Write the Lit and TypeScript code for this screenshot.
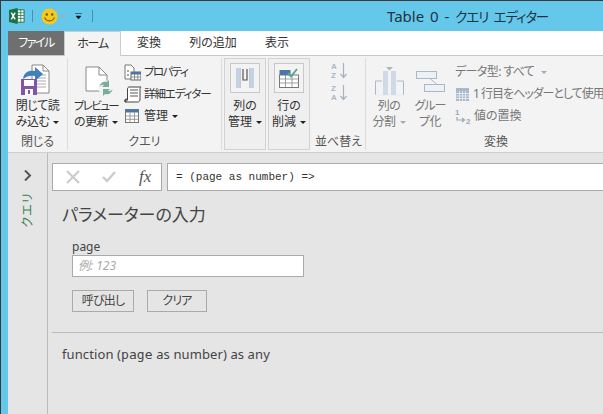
import { LitElement, html, css, svg } from "lit";
import { customElement } from "lit/decorators.js";

const arrow = (dim = false) => html`<i class="caret ${dim ? "dim" : ""}"></i>`;

@customElement("app-root")
export class AppRoot extends LitElement {
  static styles = css`
    :host { display: block; width: 603px; height: 414px; overflow: hidden; font-family: "Noto Sans", "Noto Sans CJK JP", sans-serif; font-size: 12px; color: #333; font-feature-settings: "palt"; }
    .win { width: 603px; height: 414px; box-sizing: border-box; border-top: 1px solid #3a3a3a; border-left: 1px solid #3a3a3a; background: #65c8ea; display: flex; flex-direction: column; padding-left: 7px; overflow: hidden; }
    svg { display: block; flex: none; }
    .title { height: 30px; margin-left: -7px; display: flex; align-items: center; position: relative; flex: none; }
    .qat { display: flex; align-items: center; padding-left: 8px; }
    .qat .sep { width: 1px; height: 12px; background: #4d8ea8; }
    .ttl { position: absolute; left: 386px; top: 5px; font-size: 15px; line-height: 20px; color: #1c3442; white-space: nowrap; word-spacing: 2px; }
    .ttl span { font-size: 13.5px; letter-spacing: -1.1px; word-spacing: 3px; }
    .tabs { height: 25px; flex: none; box-sizing: border-box; background: #fff; border-bottom: 1px solid #c6c6c6; display: flex; font-size: 12px; line-height: 23px; }
    .tab { text-align: center; flex: none; color: #333; white-space: nowrap; }
    .tab.file { width: 56px; height: 24px; background: #6f6f6f; color: #fff; letter-spacing: -1.5px; }
    .tab.home { width: 57px; height: 25px; box-sizing: border-box; background: #f3f3f3; border: 1px solid #ccc; border-bottom: none; letter-spacing: -1.2px; }
    .ribbon { height: 97px; flex: none; box-sizing: border-box; background: #f3f3f3; border-bottom: 1px solid #d0d0d0; display: flex; padding-top: 2px; line-height: 16px; }
    .group { display: flex; flex-direction: column; flex: none; box-sizing: border-box; height: 92px; }
    .group.sep { border-right: 1px solid #dcdcdc; }
    .body { flex: 1; display: flex; min-height: 0; }
    .label { height: 17px; line-height: 18px; text-align: center; color: #555; flex: none; }
    .large { display: flex; flex-direction: column; align-items: center; flex: none; white-space: nowrap; color: #333; }
    .large .ic { height: 38px; width: 100%; display: flex; align-items: flex-end; justify-content: center; flex: none; box-sizing: border-box; }
    .large .tx { text-align: center; margin-top: 2px; letter-spacing: -0.5px; }
    .k { font-size: 11.5px; letter-spacing: -1.6px; }
    .k2 { font-size: 11.5px; letter-spacing: -1.1px; }
    .dim { color: #777; }
    .dim .large { color: #777; }
    .caret { display: inline-block; width: 0; height: 0; border: 3px solid transparent; border-top: 3.5px solid #222; border-bottom: 0; vertical-align: 2px; margin-left: 4px; }
    .caret.dim { border-top-color: #aaa; }
    .small { display: flex; flex-direction: column; white-space: nowrap; }
    .row { height: 22px; display: flex; align-items: center; gap: 3px; }
    .boxed { width: 42px; height: 92px; box-sizing: border-box; border: 1px solid #d2d2d2; background: #efefef; margin-right: 2px; display: flex; flex-direction: column; align-items: center; flex: none; }
    .boxed .ibox { width: 30px; height: 30px; margin-top: 4px; box-sizing: border-box; border: 1px solid #c8c8c8; background: #f3f3f3; display: flex; align-items: center; justify-content: center; flex: none; }
    .boxed .tx { margin-top: 5px; text-align: center; white-space: nowrap; }
    .main { flex: 1; display: flex; min-height: 0; background: #e5e5e5; }
    .side { width: 40px; flex: none; box-sizing: border-box; border-right: 1px solid #bbb; display: flex; flex-direction: column; align-items: center; padding-top: 17px; }
    .vert { writing-mode: vertical-rl; text-orientation: sideways; transform: rotate(180deg); color: #3c8058; font-size: 12px; margin-top: 11px; line-height: 14px; font-feature-settings: normal; }
    .content { flex: 1; min-width: 0; display: flex; flex-direction: column; padding: 10px 0 0 4px; }
    .fbar { display: flex; gap: 5px; height: 28px; flex: none; }
    .fx { width: 110px; box-sizing: border-box; border: 1px solid #aaa; background: #fff; display: flex; align-items: center; flex: none; padding-left: 13px; gap: 22px; }
    .fxt { font-family: "Liberation Serif", serif; font-style: italic; font-size: 17px; color: #555; margin-left: 1px; }
    .formula { flex: 1; box-sizing: border-box; border: 1px solid #aaa; border-right: none; background: #fff; font-family: "Liberation Mono", monospace; font-size: 11px; line-height: 26px; padding-left: 8px; color: #333; white-space: nowrap; }
    .form { padding: 0 0 0 10px; height: 141px; box-sizing: border-box; flex: none; }
    h1 { margin: 12px 0 0 0; font-weight: 400; font-size: 17px; line-height: 24px; color: #444; }
    .pl { margin: 12px 0 0 10px; line-height: 16px; color: #444; font-size: 12px; }
    .inp { margin: 0 0 0 10px; width: 232px; height: 22px; box-sizing: border-box; border: 1px solid #aaa; background: #fff; padding-left: 5px; line-height: 20px; font-style: italic; color: #aaa; font-size: 12px; }
    .btns { display: flex; gap: 13px; margin: 13px 0 0 10px; }
    .btn { height: 22px; box-sizing: border-box; border: 1px solid #aaa; text-align: center; line-height: 20px; color: #444; font-size: 12px; letter-spacing: -0.8px; }
    .divider { height: 1px; background: #bbb; flex: none; }
    .fn { margin: 11px 0 0 10px; font-size: 13px; line-height: 20px; color: #444; white-space: nowrap; letter-spacing: 0.1px; }
    .fn span { font-family: "DejaVu Sans Mono", monospace; font-size: 13px; }
  `;

  private excel() {
    return svg`<svg width="16" height="16" viewBox="0 0 17 17"><rect x="6" y="2" width="10" height="13" fill="#fff" stroke="#1e7145"/><path d="M9 2v13M12.5 2v13M6 5h10M6 8h10M6 11h10" stroke="#1e7145" stroke-width=".8"/><path d="M0 2l9-2v17l-9-2z" fill="#1e7145"/><path d="M2.5 5l4 7M6.5 5l-4 7" stroke="#fff" stroke-width="1.5"/></svg>`;
  }

  private smile() {
    return svg`<svg width="17" height="17" viewBox="0 0 17 17"><circle cx="8.5" cy="8.5" r="8" fill="#f8c81c"/><circle cx="5.8" cy="6.5" r="1.2" fill="#6b5a10"/><circle cx="11.2" cy="6.5" r="1.2" fill="#6b5a10"/><path d="M3.8 9.5c1 4.5 8.4 4.5 9.4 0" fill="none" stroke="#6b5a10" stroke-width="1.1"/></svg>`;
  }

  private closeLoad() {
    return svg`<svg width="30" height="32" viewBox="0 0 30 32"><path d="M12 1h11l6 6v22H12z" fill="#fff" stroke="#888"/><path d="M23 1v6h6" fill="none" stroke="#888"/><path d="M17 11h9M17 14h9M17 17h9M17 20h9M17 23h9" stroke="#aaa"/><path d="M3 15c1-7 6-9 12-8V3l8 7-8 7v-5c-5-1-8 0-12 3z" fill="#3f80bd"/><rect x="1" y="15" width="16" height="16" fill="#8057a8"/><rect x="4" y="16" width="10" height="6" fill="#fff"/><rect x="5" y="25" width="8" height="6" fill="#fff"/><rect x="8" y="26" width="2" height="4" fill="#8057a8"/></svg>`;
  }

  private refresh() {
    return svg`<svg width="30" height="30" viewBox="0 0 30 30"><path d="M1 1h13l8 8v16H1z" fill="#fff" stroke="#888"/><path d="M14 1v8h8" fill="none" stroke="#888"/><circle cx="21" cy="22" r="7.5" fill="#f3f3f3"/><path d="M14.5 21c.5-4 4-6 7.500-5l2-2v7h-7l2-2c-2-.5-3.500.3-4.500 2zM27.500 23c-.5 4-4 6-7.500 5l-2 2v-7h7l-2 2c2 .5 3.500-.3 4.500-2z" fill="#79ad9a"/></svg>`;
  }

  private props() {
    return svg`<svg width="17" height="17" viewBox="0 0 17 17"><path d="M1 1h6l3 3v11H1z" fill="#fff" stroke="#777"/><circle cx="4" cy="7" r="1" fill="#888"/><circle cx="4" cy="11" r="1" fill="#888"/><rect x="7" y="8" width="10" height="8" fill="#fff" stroke="#666"/><rect x="7" y="8" width="10" height="2.500" fill="#4a76a8"/><path d="M10.500 10v6M13.800 10v6M7 13h10" stroke="#777" stroke-width=".8"/></svg>`;
  }

  private scroll() {
    return svg`<svg width="18" height="17" viewBox="0 0 18 17"><path d="M5 1h12c-1 1-1 2-1 3v9c0 2-1 3-2 3H1c1-.5 2-1 2.500-2V3C3.500 2 4 1 5 1z" fill="#fff" stroke="#444"/><path d="M6 4h8M6 7h8M6 10h8" stroke="#555"/><path d="M1 16c-1-2 0-3 2-3" fill="#444" stroke="#444"/></svg>`;
  }

  private table(w = 14, h = 14, c = "#4a76a8") {
    return svg`<svg width="${w}" height="${h}" viewBox="0 0 14 14"><rect x=".5" y=".5" width="13" height="13" fill="#fff" stroke="#777"/><rect x=".5" y=".5" width="13" height="3" fill="${c}"/><path d="M5 3.500v10M9.500 3.500v10M.5 7h13M.5 10.300h13" stroke="#888" stroke-width=".8"/></svg>`;
  }

  private gridDim() {
    return svg`<svg width="13" height="13" viewBox="0 0 13 13"><rect width="13" height="13" fill="#a9b9cc"/><path d="M3.500 3v10M6.500 3v10M9.500 3v10M0 5.500h13M0 8h13M0 10.500h13" stroke="#eef1f5" stroke-width=".8"/></svg>`;
  }

  private columns() {
    return svg`<svg width="18" height="22" viewBox="0 0 18 22"><rect x="0" y="1" width="4" height="20" fill="#c4d3e3"/><rect x="14" y="1" width="4" height="20" fill="#c4d3e3"/><path d="M4.500 1v20M13.500 1v20" stroke="#aab" stroke-width=".6"/><path d="M7 2v11h4V2" fill="none" stroke="#555" stroke-width="1.2"/></svg>`;
  }

  private rows() {
    return svg`<svg width="20" height="20" viewBox="0 0 20 20"><rect x=".5" y="7" width="19" height="12.500" fill="#fff" stroke="#777"/><rect x=".5" y="2" width="11" height="5" fill="#4a76a8"/><path d="M.5 11h19M.5 15h19M6.500 7v12M13 7v12" stroke="#888" stroke-width=".8"/><path d="M9 5l3 3.500L18 1" fill="none" stroke="#5ca58c" stroke-width="2"/></svg>`;
  }

  private sort(top: string, bottom: string) {
    return html`<svg width="16" height="17" viewBox="0 0 16 17">
      <text x="0" y="7" font-size="8" font-family="Liberation Sans" font-weight="700" fill="#aab6c4">${top}</text>
      <text x="0" y="16" font-size="8" font-family="Liberation Sans" font-weight="700" fill="#aab6c4">${bottom}</text>
      <path d="M12.500 1v14M9.500 12l3 3.500 3-3.500" fill="none" stroke="#a8b2bf" stroke-width="1.200"/></svg>`;
  }

  private split() {
    return svg`<svg width="29" height="29" viewBox="0 0 29 29"><path d="M.5 28V14H7M28.500 28V14H22" fill="none" stroke="#a9b9cc"/><path d="M.5 28h28" stroke="#e8edf3"/><rect x="8" y="4" width="5" height="24" fill="#cfdae6"/><rect x="16" y="4" width="5" height="24" fill="#cfdae6"/><path d="M11 0h7l-3.500 3.500z" fill="#b5b5b5"/></svg>`;
  }

  private groupBy() {
    return svg`<svg width="29" height="21" viewBox="0 0 29 21"><rect x=".5" y=".5" width="20" height="7" fill="#edf1f6" stroke="#a9b9cc"/><rect x="8.500" y="13.500" width="20" height="7" fill="#edf1f6" stroke="#a9b9cc"/><path d="M14 7.500l7 6" stroke="#a9b9cc"/></svg>`;
  }

  private replace() {
    return html`<svg width="17" height="17" viewBox="0 0 17 17">
      <text x="0" y="7" font-size="8" font-family="Liberation Sans" font-weight="700" fill="#9aa8b8">1</text>
      <text x="11" y="16" font-size="8" font-family="Liberation Sans" font-weight="700" fill="#9aa8b8">2</text>
      <path d="M2 9v3h7M7 10l2.500 2L7 14" fill="none" stroke="#9aa8b8" stroke-width="1.200"/></svg>`;
  }

  render() {
    return html`<div class="win">
      <div class="title">
        <div class="qat">
          ${this.excel()}
          <div class="sep" style="margin-left:7px"></div>
          <div style="margin-left:8px">${this.smile()}</div>
          <i class="caret dim" style="margin-left:2px"></i>
          <svg width="7" height="7" viewBox="0 0 7 7" style="margin-left:9px"><path d="M0 .5h7M1 3h5l-2.500 3z" fill="#111" stroke="#111" stroke-width=".5"/></svg>
          <div class="sep" style="margin-left:10px"></div>
        </div>
        <div class="ttl">Table 0 - <span>クエリ エディター</span></div>
      </div>
      <div class="tabs">
        <div class="tab file">ファイル</div>
        <div class="tab home">ホーム</div>
        <div class="tab" style="width:56px">変換</div>
        <div class="tab" style="width:72px">列の追加</div>
        <div class="tab" style="width:56px">表示</div>
      </div>
      <div class="ribbon">
        <div class="group sep" style="width:60px">
          <div class="body"><div class="large" style="width:59px">
            <div class="ic" style="padding-right:6px">${this.closeLoad()}</div>
            <div class="tx">閉じて読<br>み込む${arrow()}</div>
          </div></div>
          <div class="label">閉じる</div>
        </div>
        <div class="group sep" style="width:154px">
          <div class="body">
            <div class="large" style="width:56px">
              <div class="ic" style="padding-left:7px">${this.refresh()}</div>
              <div class="tx"><span class="k">プレビュー</span><br>の更新${arrow()}</div>
            </div>
            <div class="small" style="padding-top:3px">
              <div class="row">${this.props()}<span class="k">プロパティ</span></div>
              <div class="row">${this.scroll()}<span class="k2" style="margin-left:-1px">詳細エディター</span></div>
              <div class="row"><span style="margin-left:1px">${this.table()}</span><span style="margin-left:2px">管理${arrow()}</span></div>
            </div>
          </div>
          <div class="label">クエリ</div>
        </div>
        <div style="width:2px;flex:none"></div>
        <div class="boxed">
          <div class="ibox">${this.columns()}</div>
          <div class="tx">列の<br>管理${arrow()}</div>
        </div>
        <div class="boxed">
          <div class="ibox">${this.rows()}</div>
          <div class="tx">行の<br>削減${arrow()}</div>
        </div>
        <div class="group sep" style="width:54px">
          <div class="body" style="flex-direction:column;align-items:center;padding-top:4px;gap:5px">
            ${this.sort("A", "Z")}${this.sort("Z", "A")}
          </div>
          <div class="label">並べ替え</div>
        </div>
        <div class="group" style="flex:1;min-width:0">
          <div class="body dim">
            <div class="large" style="width:44px;margin-left:1px"><div class="ic">${this.split()}</div><div class="tx">列の<br>分割${arrow(true)}</div></div>
            <div class="large" style="width:38px"><div class="ic" style="padding-bottom:4px">${this.groupBy()}</div><div class="tx"><span style="letter-spacing:-1px">グルー</span><br>プ化</div></div>
            <div class="small" style="margin-left:6px;padding-top:3px">
              <div class="row" style="letter-spacing:-0.6px">データ型: すべて${arrow(true)}</div>
              <div class="row"><span style="margin-left:1px">${this.gridDim()}</span><span style="margin-left:1px;letter-spacing:-1px">1 行目をヘッダーとして使用</span></div>
              <div class="row">${this.replace()}<span style="margin-left:-1px">値の置換</span></div>
            </div>
          </div>
          <div class="label" style="width:260px">変換</div>
        </div>
      </div>
      <div class="main">
        <div class="side">
          <svg width="8" height="11" viewBox="0 0 8 11"><path d="M1 .5l5 5-5 5" fill="none" stroke="#555" stroke-width="2"/></svg>
          <div class="vert">クエリ</div>
        </div>
        <div class="content">
          <div class="fbar">
            <div class="fx">
              <svg width="14" height="14" viewBox="0 0 14 14"><path d="M1 1l12 12M13 1L1 13" stroke="#ccc" stroke-width="2.200"/></svg>
              <svg width="14" height="12" viewBox="0 0 14 12"><path d="M1 6l4 4 8-9" fill="none" stroke="#ccc" stroke-width="2.400"/></svg>
              <span class="fxt">fx</span>
            </div>
            <div class="formula">= (page as number) =></div>
          </div>
          <div class="form">
            <h1>パラメーターの入力</h1>
            <div class="pl">page</div>
            <div class="inp">例: 123</div>
            <div class="btns">
              <div class="btn" style="width:62px">呼び出し</div>
              <div class="btn" style="width:60px">クリア</div>
            </div>
          </div>
          <div class="divider"></div>
          <div class="fn">function (<span>page</span> as number) as any</div>
        </div>
      </div>
    </div>`;
  }
}
